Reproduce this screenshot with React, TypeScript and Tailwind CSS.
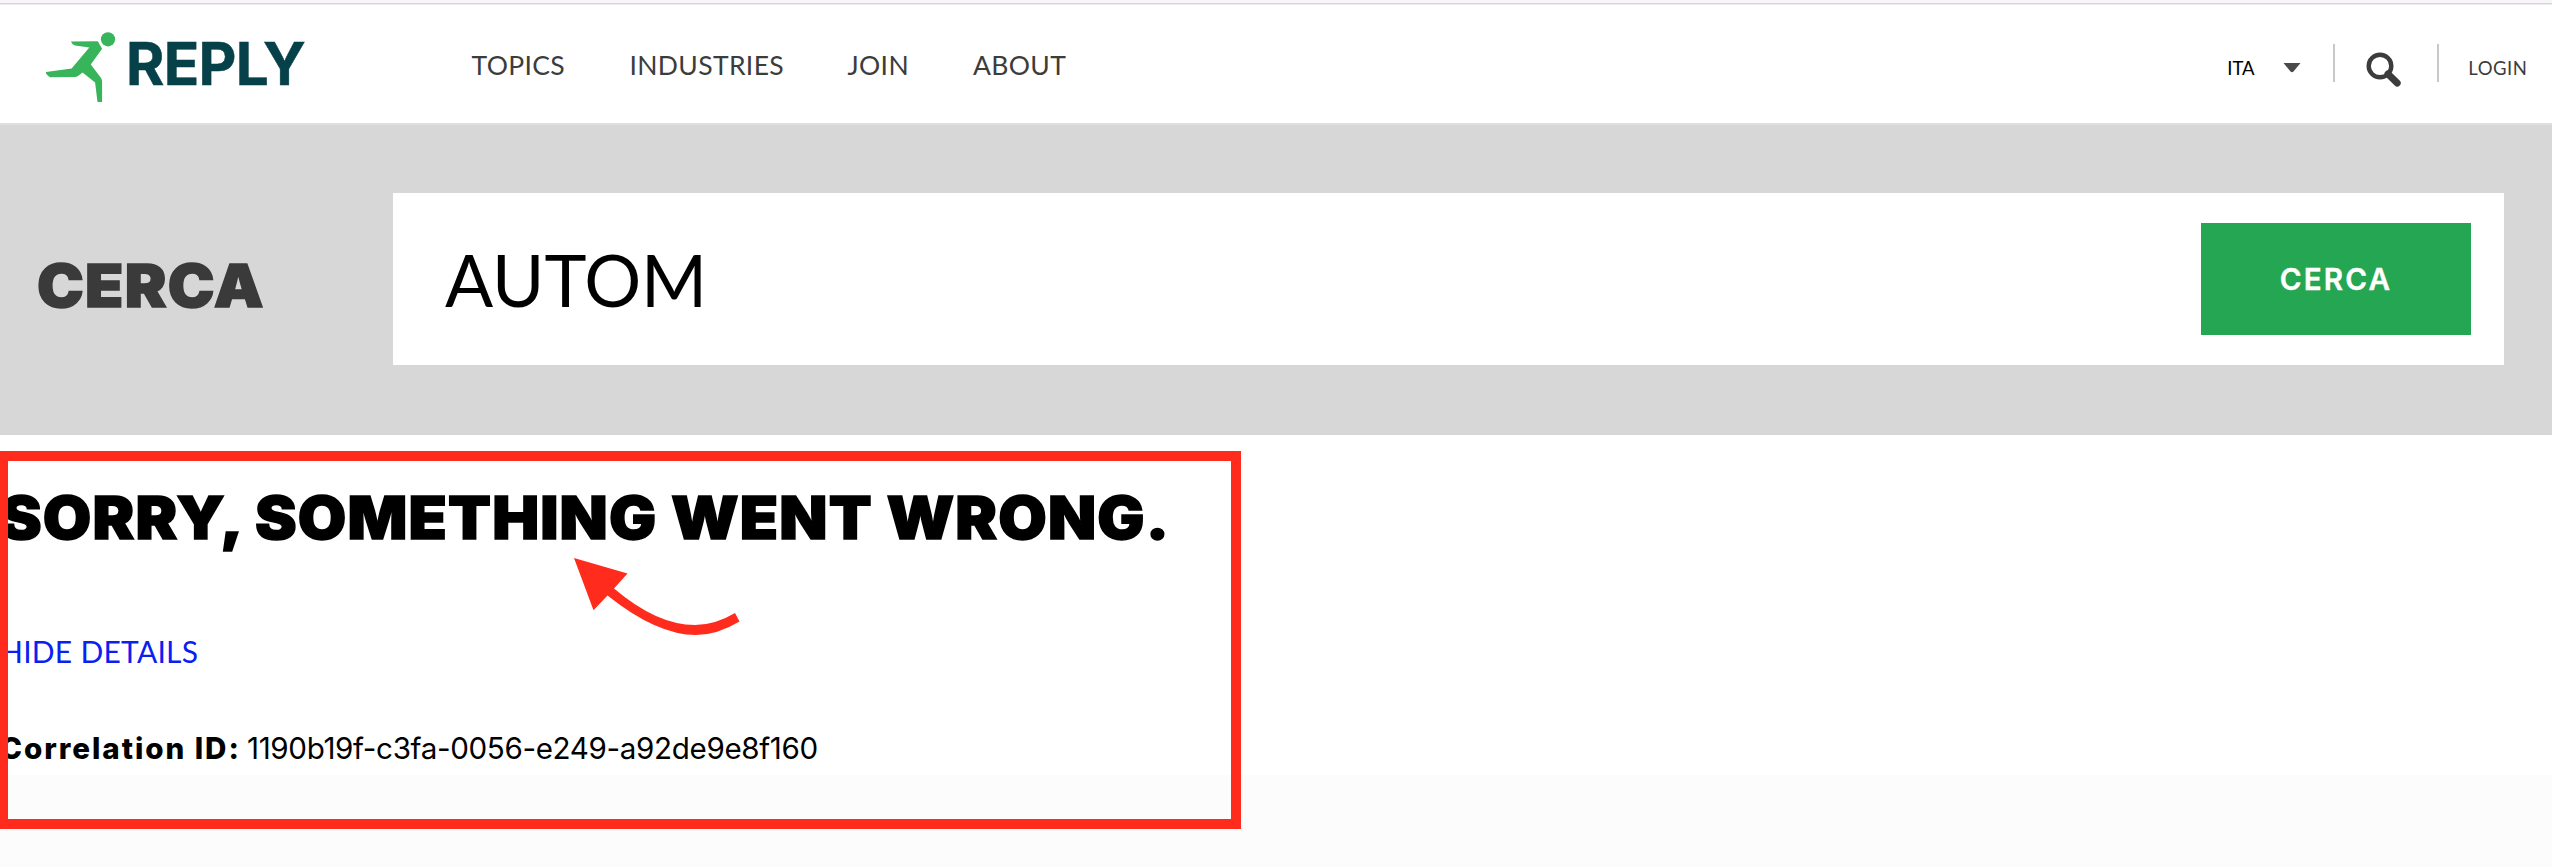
import React from "react";

function Runner() {
  return (
    <svg className="h-[72px] w-[72px] shrink-0" viewBox="45 30 72 72" fill="#38b45a">
      <circle cx="108" cy="38.3" r="7.1" />
      <path d="M71 40.4 L97.5 40.2 Q98.4 40.8 98.8 42 L102.1 47.8 L90.8 63.6 L100.5 76.2 Q102.1 78 102.1 80.2 V101 H97.5 L95.1 81.6 L82.6 71.6 L78 75 Q76.6 76 74.5 76 L50 76.2 Q48 75.2 46 72.6 V71 L71.6 67.4 L89.3 46.6 L75 44.4 Q71.6 43.2 71 40.4 Z" />
    </svg>
  );
}

function Header() {
  return (
    <header className="flex h-[120px] items-center border-b-2 border-[#e0e0e0] bg-white font-[Lato,sans-serif] text-[#3c3c3c]">
      <a className="ml-[45px] flex w-[426.5px] items-center pt-[5px]">
        <Runner />
        <span className="ml-[9px] -mt-[5px] font-[Inter,sans-serif] text-[58.5px] leading-[60px] font-bold tracking-[-0.7px] text-[#06414a] [-webkit-text-stroke:0.5px_#06414a]">
          REPLY
        </span>
      </a>
      <nav className="grid grid-cols-[158px_218px_125.5px_auto] pt-[2px] text-[26.5px] leading-[32px] tracking-[0.35px]">
        <a>TOPICS</a>
        <a>INDUSTRIES</a>
        <a>JOIN</a>
        <a>ABOUT</a>
      </nav>
      <div className="mr-[24.5px] ml-auto flex items-center">
        <div className="mt-[8px] w-[29px] overflow-hidden text-[18.5px] leading-[24px] text-black">
          <span className="-ml-[1px]">ITA</span>
        </div>
        <svg className="mt-[8px] ml-[26px] h-[10px] w-[18px]" viewBox="0 0 18 10">
          <path d="M0.5 0 H17.5 L10.5 8.5 Q9 10 7.5 8.5 Z" fill="#4a4a4a" />
        </svg>
        <div className="-mt-[2px] ml-[32px] h-[38px] w-[2px] bg-[#c8c8c8]" />
        <svg className="mt-[11px] ml-[31px] h-[36px] w-[36px]" viewBox="0 0 36 36" fill="none" stroke="#3c3c3c">
          <circle cx="14" cy="14" r="11.3" strokeWidth="4.4" />
          <path d="M22 22 L31.2 31" strokeWidth="7" strokeLinecap="round" />
        </svg>
        <div className="-mt-[2px] ml-[35px] h-[38px] w-[2px] bg-[#c8c8c8]" />
        <a className="mt-[8px] ml-[29px] text-[18.5px] leading-[24px] tracking-[0.55px]">LOGIN</a>
      </div>
    </header>
  );
}

function SearchBar() {
  return (
    <section className="flex h-[310px] items-center bg-[#d7d7d7] pb-[2px] font-[Inter,sans-serif]">
      <div className="w-[393px] pt-[14px] pl-[37px]">
        <h2 className="origin-left scale-x-107 text-[58.5px] leading-[64px] font-black tracking-[1.2px] text-[#3a3a3a] [-webkit-text-stroke:1.4px_#3a3a3a]">
          CERCA
        </h2>
      </div>
      <div className="flex h-[172px] w-[2111px] items-center justify-between bg-white pr-[33px] pl-[52px]">
        <span className="pt-[1px] font-[Lato,sans-serif] text-[71.2px] leading-[80px] text-black">AUTOM</span>
        <button className="h-[112px] w-[270px] bg-[#25a653] text-[29.6px] font-semibold tracking-[2.2px] text-white [-webkit-text-stroke:0.4px_#fff]">
          CERCA
        </button>
      </div>
    </section>
  );
}

function ErrorMessage() {
  return (
    <main className="h-[340px] overflow-hidden bg-white pt-[53px] font-[Inter,sans-serif] text-black">
      <h1 className="w-[1200px] origin-left scale-x-107 text-[58.5px] leading-[60px] font-black tracking-[1.08px] whitespace-nowrap [-webkit-text-stroke:1.4px_#000]">
        SORRY, SOMETHING WENT WRONG.
      </h1>
      <a className="mt-[83px] block font-[Lato,sans-serif] text-[30px] leading-[40px] tracking-[0.25px] text-[#0a1ff0]">
        HIDE DETAILS
      </a>
      <p className="mt-[57px] flex text-[29.6px] leading-[40px] whitespace-nowrap">
        <strong className="w-[247px] font-extrabold tracking-[1.95px]">Correlation ID:</strong>
        <span className="tracking-[-0.36px]">1190b19f-c3fa-0056-e249-a92de9e8f160</span>
      </p>
    </main>
  );
}

function Annotation() {
  return (
    <>
      <div className="absolute top-[451px] -left-[2px] h-[378px] w-[1243px] border-10 border-[#ff2b1d]" />
      <svg className="absolute top-[540px] left-[550px] h-[110px] w-[220px]" viewBox="0 0 220 110">
        <path d="M24 18 L77.5 33.5 L64 48.5 Q107 85 145 85 Q165 85 185 73 L189.5 81.5 Q167 95 146 95 Q107 95 57.5 55.5 L43.5 70.3 Z" fill="#ff2b1d" />
      </svg>
    </>
  );
}

export default function App() {
  return (
    <div className="relative h-[867px] w-full overflow-hidden bg-[#fcfcfc]">
      <div className="h-[5px] border-b border-[#efedf0] bg-[#f7f5f8]">
        <div className="h-[4px] border-b border-[#d5d3d6]" />
      </div>
      <Header />
      <SearchBar />
      <ErrorMessage />
      <Annotation />
    </div>
  );
}
